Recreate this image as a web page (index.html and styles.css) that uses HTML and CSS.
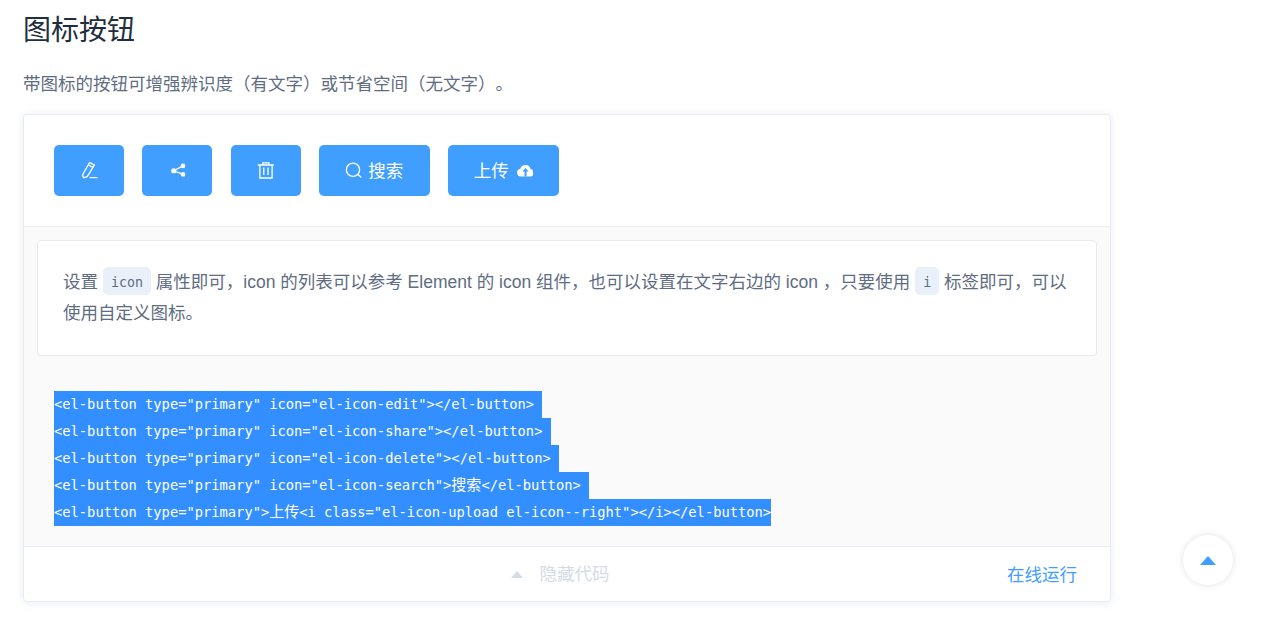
FILE: index.html
```html
<!DOCTYPE html>
<html lang="zh-CN">
<head>
<meta charset="utf-8">
<title>图标按钮</title>
<link rel="stylesheet" href="styles.css">
</head>
<body>
<main class="page">
  <h3 class="title">图标按钮</h3>
  <p class="lead">带图标的按钮可增强辨识度（有文字）或节省空间（无文字）。</p>
  <section class="card">
    <div class="demo">
      <button class="btn"><svg class="ico" viewBox="0 0 17.5 17.5"><path d="M9.6.5l4.8 2.6L7.2 14.6l-3.6 1.1-1.1-2.7zM8.2 2.8l4.6 2.6" fill="none" stroke="#fff" stroke-width="1.3"/><path d="M9.5 15.6h8" stroke="#fff" stroke-width="1.2"/></svg></button>
      <button class="btn"><svg class="ico" viewBox="0 0 17.5 17.5"><circle cx="4.75" cy="8.75" r="2.6" fill="#fff"/><circle cx="14" cy="3.9" r="2.3" fill="#fff"/><circle cx="14" cy="12.4" r="2.3" fill="#fff"/><path d="M4.75 8.75L14 3.9M4.75 8.75L14 12.4" stroke="#fff" stroke-width="1.2"/></svg></button>
      <button class="btn"><svg class="ico" viewBox="0 0 17.5 17.5"><path d="M.8 3h16M5.8 3V.8h6V3M2.9 3v13h12.2V3M6.8 5.5v7.5M11 5.5v7.5" fill="none" stroke="#fff" stroke-width="1.3"/></svg></button>
      <button class="btn"><svg class="ico" viewBox="0 0 17.5 17.5"><circle cx="8" cy="7.75" r="6.6" fill="none" stroke="#fff" stroke-width="1.3"/><path d="M13 12.6l3.3 3" stroke="#fff" stroke-width="1.3"/></svg><span class="btn-label btn-text-after">搜索</span></button>
      <button class="btn"><span class="btn-label btn-text-before">上传</span><svg class="ico ico-right" viewBox="0 0 17.5 17.5"><path d="M5 14.6a4 4 0 0 1-.7-7.9 5.4 5.4 0 0 1 10.3.4 3.8 3.8 0 0 1-.4 7.5z" fill="#fff"/><path d="M9.5 6L6.4 9.4h2.1v5.2h2V9.4h2.1z" fill="#409eff"/></svg></button>
    </div>
    <div class="meta">
      <div class="desc">
        <p>设置 <code class="inline">icon</code> 属性即可，icon 的列表可以参考 Element 的 icon 组件，也可以设置在文字右边的 icon ，只要使用 <code class="inline">i</code> 标签即可，可以使用自定义图标。</p>
      </div>
      <pre class="code"><span class="sel tr">&lt;el-button type="primary" icon="el-icon-edit"&gt;&lt;/el-button&gt;</span>
<span class="sel tr">&lt;el-button type="primary" icon="el-icon-share"&gt;&lt;/el-button&gt;</span>
<span class="sel tr">&lt;el-button type="primary" icon="el-icon-delete"&gt;&lt;/el-button&gt;</span>
<span class="sel tr">&lt;el-button type="primary" icon="el-icon-search"&gt;<span class="cjk">搜索</span>&lt;/el-button&gt;</span>
<span class="sel">&lt;el-button type="primary"&gt;<span class="cjk">上传</span>&lt;i class="el-icon-upload el-icon--right"&gt;&lt;/i&gt;&lt;/el-button&gt;</span></pre>
    </div>
    <div class="foot">
      <div class="toggle"><i class="tri tri-gray"></i><span class="toggle-label">隐藏代码</span></div>
      <a class="run">在线运行</a>
    </div>
  </section>
</main>
<div class="top"><i class="tri tri-blue"></i></div>
</body>
</html>
```
FILE: styles.css
```css
* { box-sizing: border-box; }
html, body { margin: 0; height: 100%; background: #fff; overflow: hidden; }
body { font-family: "Liberation Sans", "Noto Sans CJK SC", sans-serif; color: #5e6d82; text-spacing-trim: space-all; }
.page { width: 1111px; padding-left: 23px; }
.title { margin: 0; height: 60px; padding-top: 1px; font-size: 28px; font-weight: 400; line-height: 60px; color: #1f2f3d; }
.lead { margin: 0; height: 54px; padding-top: 9px; font-size: 17.5px; line-height: 30px; }
.card { border: 1px solid #ebebeb; border-radius: 4px; box-shadow: 0 0 8px rgba(232, 237, 250, .6), 0 2px 6px rgba(232, 237, 250, .5); }
.demo { display: flex; gap: 18.3px; padding: 30px; border-bottom: 1px solid #f0f0f0; }
.btn { display: flex; align-items: center; height: 51px; padding: 0 26.25px; border: 0; border-radius: 5px; background: #409eff; color: #fff; font: inherit; font-size: 17.5px; }
.btn-label { margin-bottom: 2px; }
.ico { display: block; width: 17.5px; height: 17.5px; flex: none; }
.btn-text-after { margin-left: 5.5px; margin-right: .5px; }
.btn-text-before { margin-left: -.75px; }
.ico-right { margin-left: 7px; }
.meta { background: #fafafa; padding: 13px 13px 0; }
.desc { background: #fff; border: 1px solid #ebebeb; border-radius: 4px; padding: 25.5px 25px; font-size: 17.5px; line-height: 31.5px; }
.desc p { margin: 0; }
.inline { display: inline-block; height: 28px; padding: 3px 8px 0; border-radius: 5px; background: #e9f0fa; font-family: "DejaVu Sans Mono", monospace; font-size: 13.3px; line-height: 25px; vertical-align: top; color: #5e6d82; }
.code { margin: 0; padding: 35px 17px 20px; font-family: "DejaVu Sans Mono", monospace; font-size: 13.75px; line-height: 27px; color: #fff; }
.sel { display: inline-block; height: 27px; background: #338fff; }
.cjk { font-family: "Noto Sans CJK SC", sans-serif; font-size: 15px; line-height: 1; }
.tr { padding-right: 8.25px; }
.foot { position: relative; display: flex; align-items: center; justify-content: center; height: 55px; border-top: 1px solid #eaeefb; font-size: 17.5px; }
.toggle { display: flex; align-items: center; gap: 17px; color: #d3dce6; padding-right: 14px; }
.toggle-label { margin-bottom: 3px; }
.run { position: absolute; right: 33px; top: 15px; line-height: 27px; color: #409eff; }
.tri { display: block; width: 0; height: 0; border-style: solid; border-color: transparent; }
.tri-gray { border-width: 0 6.5px 7.5px; border-bottom-color: #d3dce6; }
.tri-blue { border-width: 0 8px 9.5px; border-bottom-color: #409eff; }
.top { position: fixed; left: 1183px; top: 535px; display: flex; align-items: center; justify-content: center; width: 50px; height: 50px; border-radius: 50%; background: #fff; box-shadow: 0 0 7px rgba(0, 0, 0, .12); }
```
